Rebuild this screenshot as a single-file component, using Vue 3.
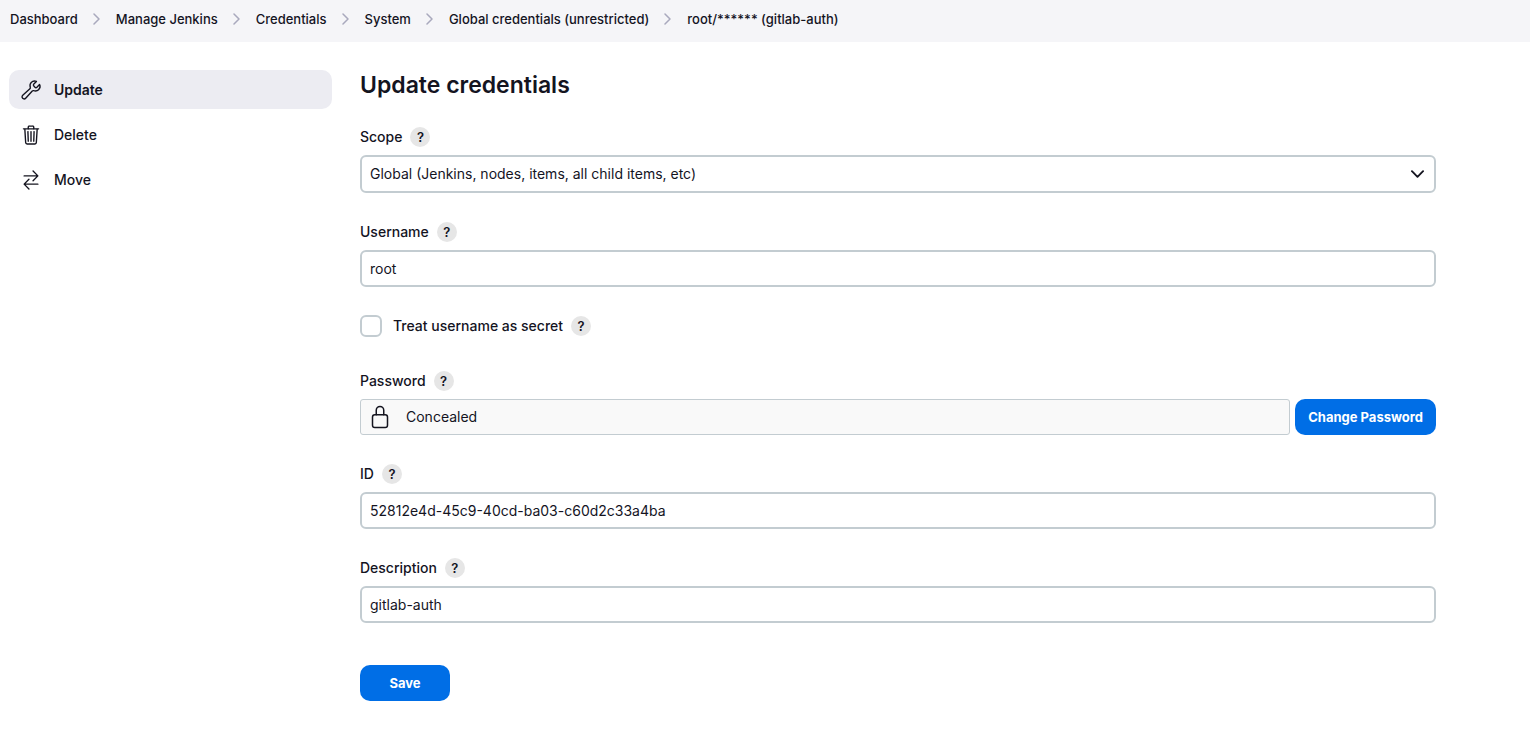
<template>
  <div class="page">
    <nav class="breadcrumbs" aria-label="Breadcrumbs">
      <ol>
        <li v-for="crumb in breadcrumbs" :key="crumb">
          <a href="#">{{ crumb }}</a>
          <svg class="separator" viewBox="0 0 8 12" aria-hidden="true">
            <path d="M1 1l5 5-5 5" />
          </svg>
        </li>
      </ol>
    </nav>

    <div class="page-body">
      <aside class="side-panel">
        <a
          v-for="task in tasks"
          :key="task.label"
          href="#"
          class="task"
          :class="{ 'task-active': task.active }"
        >
          <svg class="task-icon" viewBox="0 0 512 512" aria-hidden="true">
            <path v-for="d in task.paths" :key="d" :d="d" />
          </svg>
          <span>{{ task.label }}</span>
        </a>
      </aside>

      <main class="main-panel">
        <h1>Update credentials</h1>

        <form @submit.prevent>
          <div class="form-item">
            <div class="form-label">
              <label for="scope">Scope</label>
              <button type="button" class="help" aria-label="Help for Scope">?</button>
            </div>
            <div class="select">
              <select id="scope" v-model="scope">
                <option value="GLOBAL">Global (Jenkins, nodes, items, all child items, etc)</option>
                <option value="SYSTEM">System (Jenkins and nodes only)</option>
              </select>
              <svg class="select-arrow" viewBox="0 0 14 8" aria-hidden="true">
                <path d="M1 1l6 6 6-6" />
              </svg>
            </div>
          </div>

          <div class="form-item">
            <div class="form-label">
              <label for="username">Username</label>
              <button type="button" class="help" aria-label="Help for Username">?</button>
            </div>
            <input id="username" v-model="username" class="input" type="text" />
          </div>

          <div class="form-item checkbox-item">
            <input id="username-secret" v-model="usernameSecret" class="checkbox" type="checkbox" />
            <label for="username-secret">Treat username as secret</label>
            <button type="button" class="help" aria-label="Help for Treat username as secret">?</button>
          </div>

          <div class="form-item">
            <div class="form-label">
              <span>Password</span>
              <button type="button" class="help" aria-label="Help for Password">?</button>
            </div>
            <div class="password">
              <div class="concealed">
                <svg class="lock-icon" viewBox="0 0 512 512" aria-hidden="true">
                  <path d="M336 208v-95a80 80 0 00-160 0v95" />
                  <rect x="96" y="208" width="320" height="272" rx="48" ry="48" />
                </svg>
                <span>Concealed</span>
              </div>
              <button type="button" class="button">Change Password</button>
            </div>
          </div>

          <div class="form-item">
            <div class="form-label">
              <label for="credential-id">ID</label>
              <button type="button" class="help" aria-label="Help for ID">?</button>
            </div>
            <input id="credential-id" class="input" type="text" :value="credentialId" readonly />
          </div>

          <div class="form-item">
            <div class="form-label">
              <label for="description">Description</label>
              <button type="button" class="help" aria-label="Help for Description">?</button>
            </div>
            <input id="description" v-model="description" class="input" type="text" />
          </div>

          <button type="submit" class="button save">Save</button>
        </form>
      </main>
    </div>
  </div>
</template>

<script setup>
import { ref } from 'vue'

const breadcrumbs = [
  'Dashboard',
  'Manage Jenkins',
  'Credentials',
  'System',
  'Global credentials (unrestricted)',
  'root/****** (gitlab-auth)'
]

const tasks = [
  {
    label: 'Update',
    active: true,
    paths: [
      'M393.87 190a32.1 32.1 0 01-45.25 0l-26.57-26.57a32.09 32.09 0 010-45.26L382.19 58a1 1 0 00-.3-1.64c-38.82-16.64-89.15-8.16-121.11 23.57-30.58 30.35-32.32 76-21.12 115.84a31.93 31.93 0 01-9.06 32.08L64 380a48.17 48.17 0 1068 68l153.86-167a31.93 31.93 0 0131.6-9.13c39.54 10.59 84.54 8.6 114.72-21.19 32.49-32 39.5-88.56 23.75-120.93a1 1 0 00-1.6-.26z'
    ]
  },
  {
    label: 'Delete',
    paths: [
      'M112 112l20 320c.95 18.49 14.4 32 32 32h184c17.67 0 30.87-13.51 32-32l20-320M80 112h352',
      'M192 112V72a23.93 23.93 0 0124-24h80a23.93 23.93 0 0124 24v40M256 176v224M184 176l8 224M328 176l-8 224'
    ]
  },
  {
    label: 'Move',
    paths: [
      'M304 48l112 112-112 112M398.87 160H96',
      'M208 464L96 352l112-112M114 352h302'
    ]
  }
]

const scope = ref('GLOBAL')
const username = ref('root')
const usernameSecret = ref(false)
const credentialId = '52812e4d-45c9-40cd-ba03-c60d2c33a4ba'
const description = ref('gitlab-auth')
</script>

<style>
body {
  background: #fff;
}
</style>

<style scoped>
.page {
  color: #14141f;
  font-family: Inter, "Liberation Sans", sans-serif;
  font-size: 14px;
  line-height: 20px;
}

.page *,
.page *::before {
  box-sizing: border-box;
}

a {
  color: inherit;
  text-decoration: none;
}

button,
input,
select {
  margin: 0;
  color: inherit;
  font: inherit;
}

svg {
  flex: none;
  fill: none;
  stroke: currentColor;
  stroke-linecap: round;
  stroke-linejoin: round;
}

.breadcrumbs {
  padding: 9px 10px 13px;
  background: #f5f5f8;
  font-size: 13px;
  font-weight: 500;
}

.breadcrumbs ol {
  display: flex;
  flex-wrap: wrap;
  gap: 15px;
  margin: 0;
  padding: 0;
  list-style: none;
}

.breadcrumbs li {
  display: flex;
  align-items: center;
  gap: 15px;
}

.breadcrumbs li:last-child .separator {
  display: none;
}

.separator {
  width: 8px;
  height: 12px;
  color: #a9a9bd;
  stroke-width: 1.5;
}

.page-body {
  display: flex;
  gap: 28px;
  padding: 28px 94px 43px 9px;
}

.side-panel {
  display: flex;
  flex: none;
  flex-direction: column;
  gap: 6px;
  width: 323px;
}

.task {
  display: flex;
  align-items: center;
  gap: 12px;
  height: 39px;
  padding: 0 11px;
  border-radius: 10px;
  font-weight: 500;
}

.task-active {
  background: #ececf2;
  font-weight: 600;
}

.task-icon {
  width: 22px;
  height: 22px;
  stroke-width: 32;
}

.main-panel {
  flex: 1;
  min-width: 0;
}

h1 {
  margin: 0 0 27px;
  font-size: 23px;
  font-weight: 600;
  line-height: 30px;
}

.form-item {
  margin-bottom: 29px;
}

.form-label {
  display: flex;
  align-items: center;
  gap: 8px;
  margin-bottom: 8px;
  font-weight: 500;
}

.help {
  width: 20px;
  height: 20px;
  padding: 0;
  border: none;
  border-radius: 50%;
  background: #e6e6e6;
  font-size: 13px;
  font-weight: 600;
  line-height: 20px;
  text-align: center;
  cursor: pointer;
}

.input,
.select select {
  display: block;
  width: 100%;
  height: 37px;
  padding: 0 8px;
  border: 2px solid #c3ccd1;
  border-radius: 6px;
  background: #fff;
}

.select {
  position: relative;
}

.select select {
  height: 38px;
  padding-right: 36px;
  appearance: none;
}

.select-arrow {
  position: absolute;
  top: 15px;
  right: 12px;
  width: 13px;
  height: 8px;
  stroke-width: 2;
  pointer-events: none;
}

.checkbox-item {
  display: flex;
  align-items: center;
  height: 20px;
  margin-bottom: 35px;
  font-weight: 500;
}

.checkbox-item .help {
  margin-left: 8px;
}

.checkbox {
  flex: none;
  width: 22px;
  height: 22px;
  margin-right: 11px;
  border: 2px solid #c3ccd1;
  border-radius: 6px;
  background: #fff;
  appearance: none;
}

.checkbox:checked {
  border-color: #006ee6;
  background: #006ee6;
}

.password {
  display: flex;
  gap: 5px;
}

.concealed {
  display: flex;
  flex: 1;
  align-items: center;
  gap: 14px;
  height: 36px;
  padding: 0 7px;
  border: 1px solid #c3ccd1;
  border-radius: 3px;
  background: #f9f9f9;
}

.lock-icon {
  width: 24px;
  height: 24px;
  stroke-width: 32;
}

.button {
  min-width: 90px;
  height: 36px;
  padding: 0 13px;
  border: none;
  border-radius: 10px;
  background: #006ee6;
  color: #fff;
  font-size: 13px;
  font-weight: 700;
  cursor: pointer;
}

.save {
  display: block;
  margin-top: 42px;
}
</style>
